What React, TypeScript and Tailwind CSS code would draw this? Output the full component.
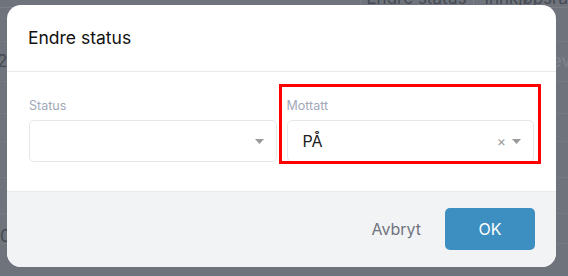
type SelectProps = {
    label: string;
    value?: string;
    clearable?: boolean;
};

function Caret() {
    return (
        <svg width="9" height="5" viewBox="0 0 9 5" className="fill-[#9a9a9a]">
            <path d="M0 0h9L4.5 5z" />
        </svg>
    );
}

function Select(props: SelectProps) {
    return (
        <div className="flex flex-col">
            <span className="text-[12.5px] leading-[16px] text-[#a1a8b9] mb-[6px]">{props.label}</span>
            <div className="flex items-center h-[42px] rounded-[5px] border border-[#e6e7ea] bg-white pl-[15px] pr-[12px]">
                <span className="flex-1 text-[16px] text-[#222]">{props.value}</span>
                {props.clearable &&
                    <span className="text-[14px] leading-none text-[#9a9a9a] mr-[6px]">×</span>
                }
                <Caret />
            </div>
        </div>
    );
}

export default function App() {
    return (
        <div className="relative w-[568px] h-[276px] overflow-hidden bg-[#6f747c] font-['Inter',sans-serif]">
            {/* page behind the dimmed overlay */}
            <div className="flex flex-col text-[#454a52]">
                <div className="flex h-[22px] -mt-[14px] border-b border-[#7a7f87] text-[17px]">
                    <div className="w-[375px] border-r border-[#7a7f87]" />
                    <div className="w-[117px] pl-[5px] border-r border-[#7a7f87]">Endre status</div>
                    <div className="pl-[10px]">Innkjøpsra</div>
                </div>
                <div className="h-[34px] border-b border-[#767b83]" />
                <div className="flex h-[40px] items-center justify-between border-b border-[#767b83] text-[17px] -mx-[3px]">
                    <span>2</span>
                    <span className="text-[#80858d]">ev</span>
                </div>
                <div className="h-[32px] border-b border-[#767b83]" />
                <div className="h-[28px] border-b border-[#767b83]" />
                <div className="h-[36px] border-b border-[#767b83]" />
                <div className="h-[36px] border-b border-[#767b83]" />
                <div className="flex h-[30px] items-end border-b border-[#767b83]">
                    <span className="w-[30px] border-r border-[#7a7f87] text-[17px] leading-[14px]">022</span>
                </div>
            </div>

            {/* modal */}
            <div className="absolute left-[7px] top-[5px] w-[549px] h-[262px] flex flex-col rounded-[14px] overflow-hidden bg-white">
                <div className="h-[67px] flex items-center px-[21px] border-b border-[#e8e9ec]">
                    <span className="text-[17.5px] text-[#111]">Endre status</span>
                </div>
                <div className="h-[120px] grid grid-cols-2 gap-[10px] pl-[22px] pr-[22px] pt-[26px] border-b border-[#e8e9ec]">
                    <Select label="Status" />
                    <div className="relative">
                        <Select label="Mottatt" value="PÅ" clearable />
                        <div className="absolute -left-[8px] -right-[7px] -top-[14px] h-[80px] border-[3px] border-[#ff0000]" />
                    </div>
                </div>
                <div className="flex-1 flex items-center justify-end gap-[24px] bg-[#f2f3f5] pr-[21px] pb-[2px]">
                    <button className="text-[16px] text-[#70757f]">Avbryt</button>
                    <button className="w-[90px] h-[42px] rounded-[5px] bg-[#3c8fc0] text-[16px] text-white">OK</button>
                </div>
            </div>
        </div>
    );
}
